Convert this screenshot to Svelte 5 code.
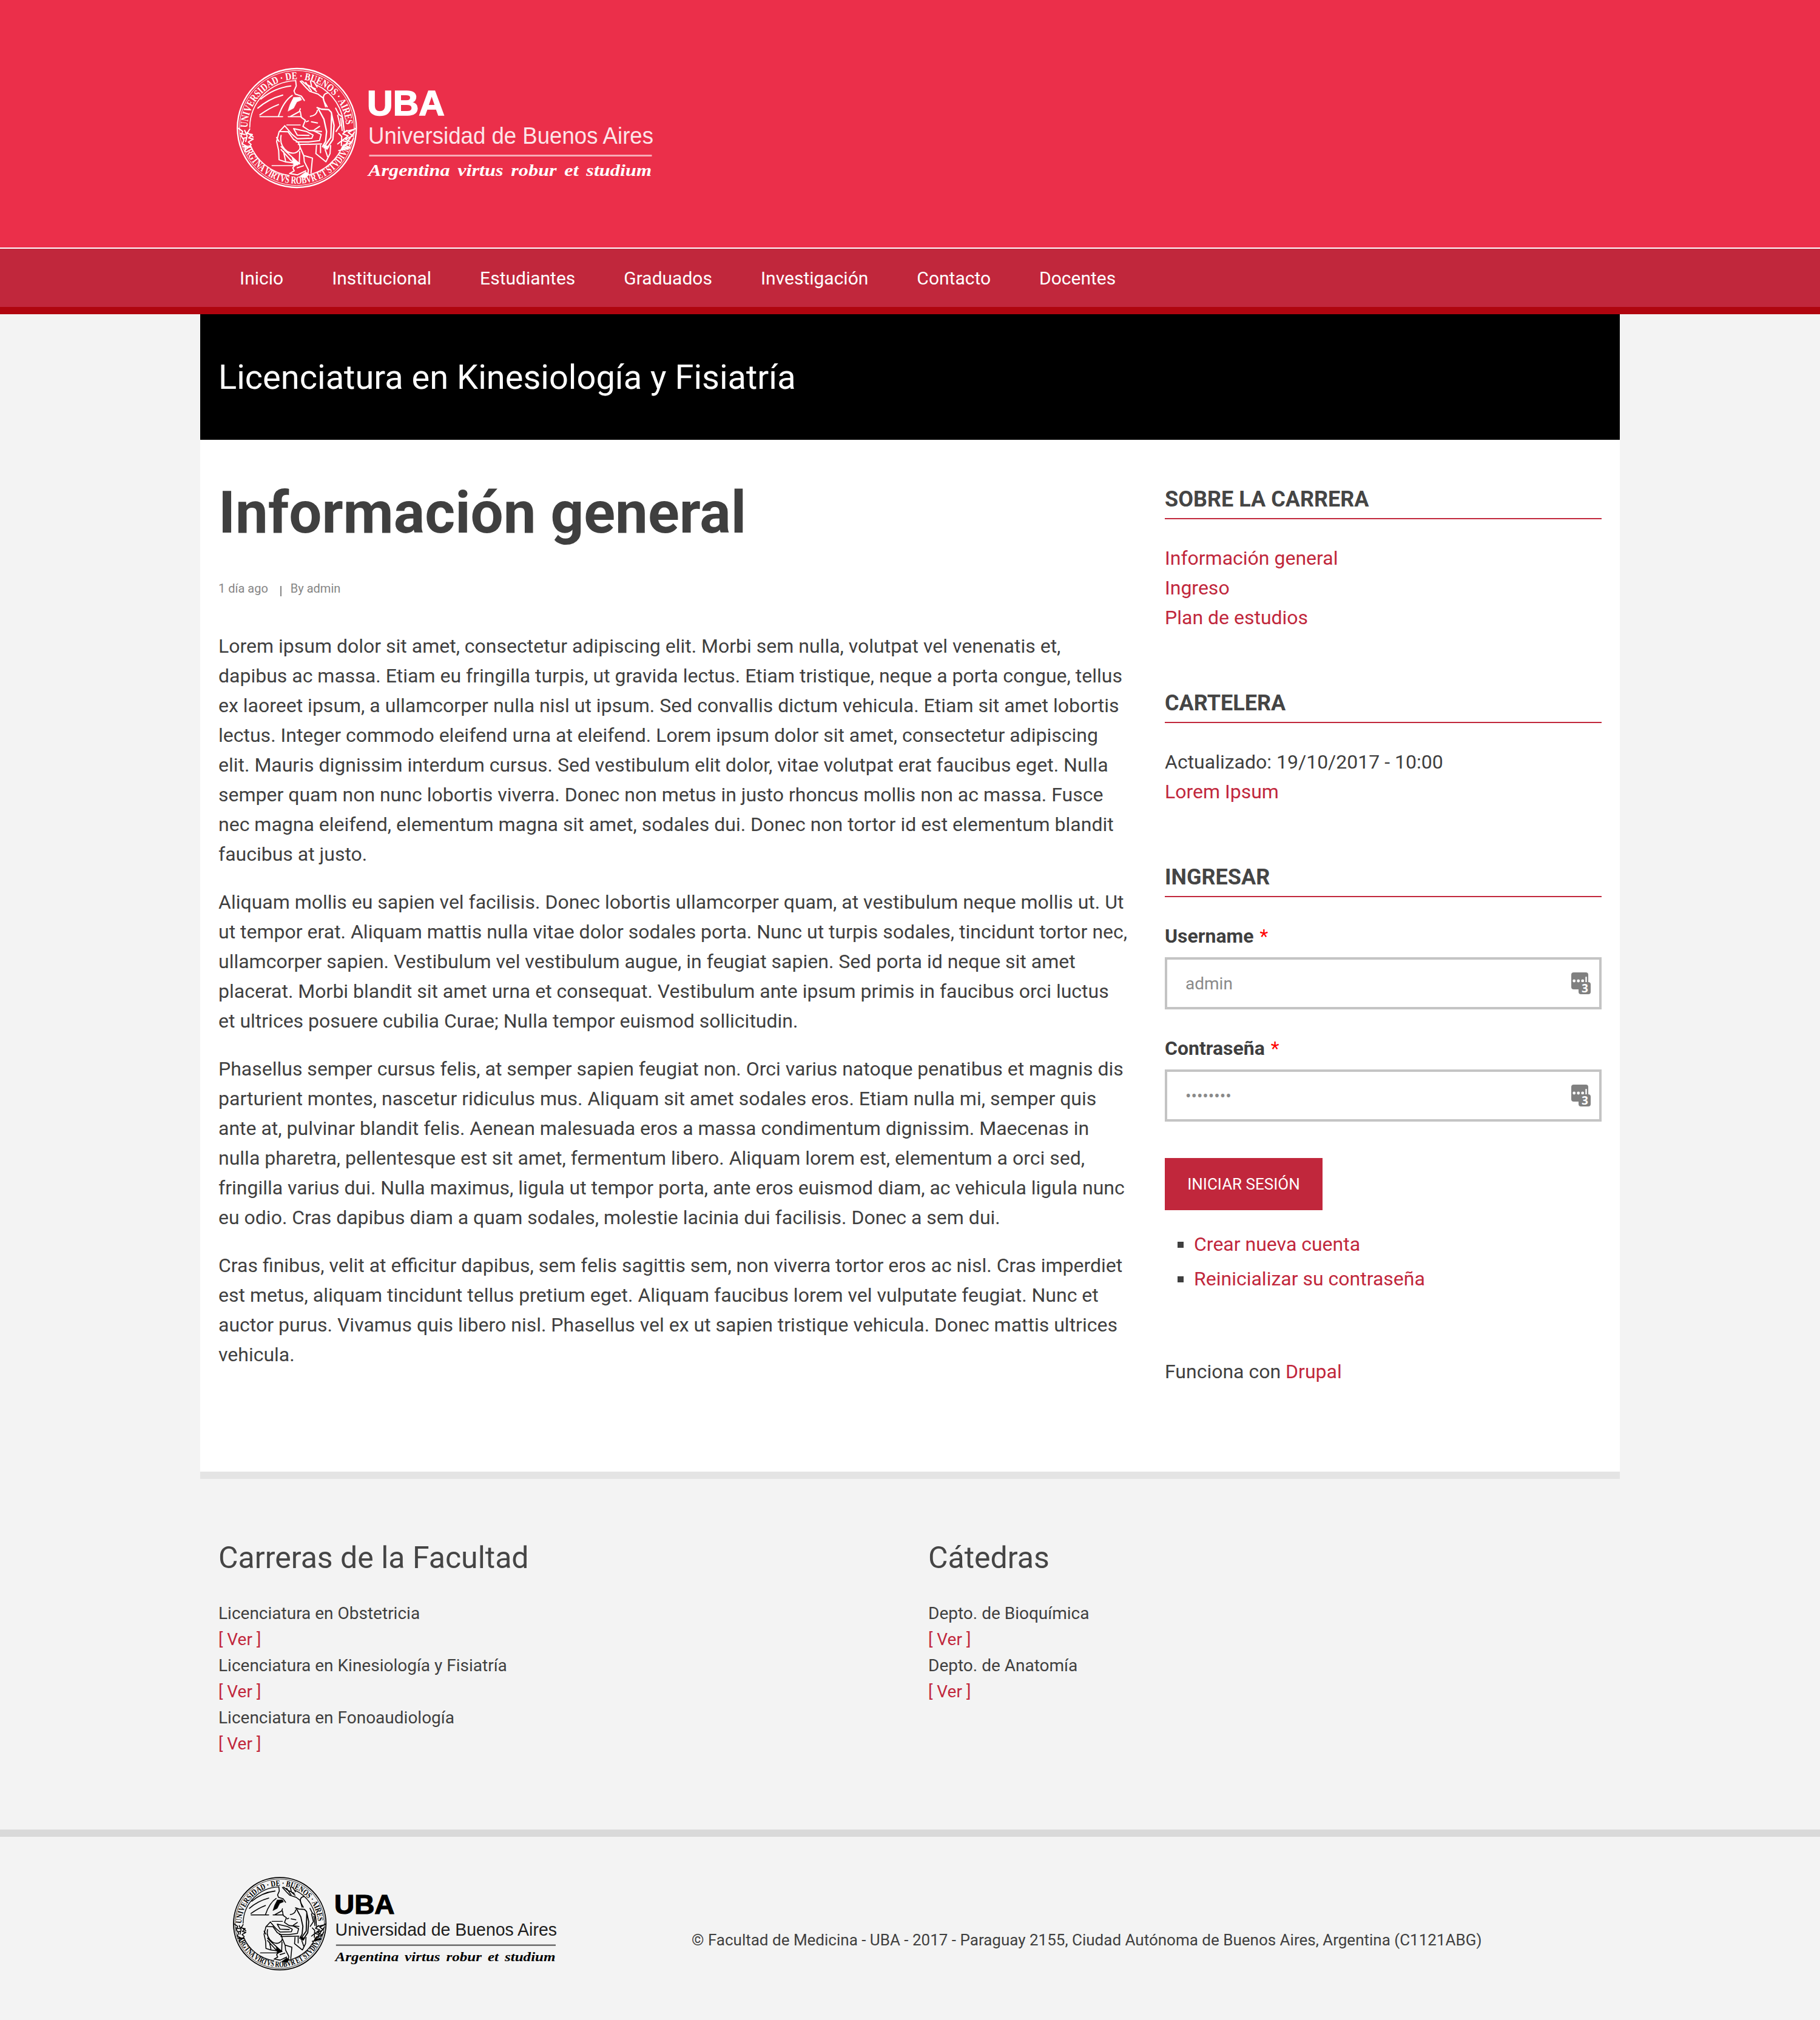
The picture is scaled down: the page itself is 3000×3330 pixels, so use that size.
<script>
  const nav = ['Inicio', 'Institucional', 'Estudiantes', 'Graduados', 'Investigación', 'Contacto', 'Docentes'];

  const paragraphs = [
    'Lorem ipsum dolor sit amet, consectetur adipiscing elit. Morbi sem nulla, volutpat vel venenatis et, dapibus ac massa. Etiam eu fringilla turpis, ut gravida lectus. Etiam tristique, neque a porta congue, tellus ex laoreet ipsum, a ullamcorper nulla nisl ut ipsum. Sed convallis dictum vehicula. Etiam sit amet lobortis lectus. Integer commodo eleifend urna at eleifend. Lorem ipsum dolor sit amet, consectetur adipiscing elit. Mauris dignissim interdum cursus. Sed vestibulum elit dolor, vitae volutpat erat faucibus eget. Nulla semper quam non nunc lobortis viverra. Donec non metus in justo rhoncus mollis non ac massa. Fusce nec magna eleifend, elementum magna sit amet, sodales dui. Donec non tortor id est elementum blandit faucibus at justo.',
    'Aliquam mollis eu sapien vel facilisis. Donec lobortis ullamcorper quam, at vestibulum neque mollis ut. Ut ut tempor erat. Aliquam mattis nulla vitae dolor sodales porta. Nunc ut turpis sodales, tincidunt tortor nec, ullamcorper sapien. Vestibulum vel vestibulum augue, in feugiat sapien. Sed porta id neque sit amet placerat. Morbi blandit sit amet urna et consequat. Vestibulum ante ipsum primis in faucibus orci luctus et ultrices posuere cubilia Curae; Nulla tempor euismod sollicitudin.',
    'Phasellus semper cursus felis, at semper sapien feugiat non. Orci varius natoque penatibus et magnis dis parturient montes, nascetur ridiculus mus. Aliquam sit amet sodales eros. Etiam nulla mi, semper quis ante at, pulvinar blandit felis. Aenean malesuada eros a massa condimentum dignissim. Maecenas in nulla pharetra, pellentesque est sit amet, fermentum libero. Aliquam lorem est, elementum a orci sed, fringilla varius dui. Nulla maximus, ligula ut tempor porta, ante eros euismod diam, ac vehicula ligula nunc eu odio. Cras dapibus diam a quam sodales, molestie lacinia dui facilisis. Donec a sem dui.',
    'Cras finibus, velit at efficitur dapibus, sem felis sagittis sem, non viverra tortor eros ac nisl. Cras imperdiet est metus, aliquam tincidunt tellus pretium eget. Aliquam faucibus lorem vel vulputate feugiat. Nunc et auctor purus. Vivamus quis libero nisl. Phasellus vel ex ut sapien tristique vehicula. Donec mattis ultrices vehicula.'
  ];

  const links = ['Información general', 'Ingreso', 'Plan de estudios'];
  const fields = [
    { id: 'user', label: 'Username', type: 'text', value: 'admin' },
    { id: 'pass', label: 'Contraseña', type: 'password', value: 'password' }
  ];
  const accountLinks = ['Crear nueva cuenta', 'Reinicializar su contraseña'];
  const directories = [
    { title: 'Carreras de la Facultad', items: ['Licenciatura en Obstetricia', 'Licenciatura en Kinesiología y Fisiatría', 'Licenciatura en Fonoaudiología'] },
    { title: 'Cátedras', items: ['Depto. de Bioquímica', 'Depto. de Anatomía'] }
  ];
</script>

{#snippet logo(id)}
  <svg class="logo-art" viewBox="0 0 720 220" aria-label="UBA Universidad de Buenos Aires">
    <defs>
      <path id="{id}-top" d="M83.500 336 A244 244 0 0 1 572 336" />
      <path id="{id}-bottom" d="M62 418 A281 281 0 0 0 594 418" />
    </defs>
    <g transform="scale(0.33333)" fill="none" stroke="currentColor" stroke-width="6" stroke-linecap="round" stroke-linejoin="round">
      <circle cx="328" cy="333" r="294" stroke-width="7" />
      <circle cx="328" cy="333" r="284" stroke-width="3" />
      <path d="M95 330 A234 234 0 0 1 320 99 M425 120 A234 234 0 0 1 560 330 M98 418 A245 245 0 0 0 290 568 M390 564 A245 245 0 0 0 556 420" stroke-width="5" />
      <g class="ring-text" fill="currentColor" stroke="none">
        <text><textPath href="#{id}-top" startOffset="4" textLength="744" lengthAdjust="spacingAndGlyphs">UNIVERSIDAD · DE · BUENOS · AIRES</textPath></text>
        <text><textPath href="#{id}-bottom" startOffset="4" textLength="690" lengthAdjust="spacingAndGlyphs">ARGTNA VIRTVS ROBVR ET STVDIVM</textPath></text>
      </g>
      <path d="M150 190 Q215 135 298 125 M135 235 Q185 190 258 170 M145 268 Q190 235 237 217" />
      <path d="M145 277 H258 M285 277 H350 M278 318 H345 M205 519 H320" stroke-width="5" />
      <path d="M322 98 L325 125 L314 150 L320 165 L350 175 L365 197 M237 275 Q262 200 305 172" />
      <path d="M312 182 L345 180 L352 194 L328 204 L312 235 L284 250 Q292 215 312 182Z" fill="currentColor" stroke-width="2" />
      <path d="M345 102 L372 132 L392 152 L432 165 M352 100 L388 128 M372 108 L400 150 M395 100 L402 132 L425 152 M410 102 L428 130 M432 165 L458 185 L470 228 M380 120 L420 140" />
      <path d="M298 275 L340 252 L345 238 M345 252 L350 280 L370 295 L358 325 L388 345 L450 350 M395 275 Q425 272 430 245 M375 302 L385 298 M400 302 L430 308 M415 342 L440 325" />
      <path d="M428 232 L450 240 L485 242 L498 255 L512 320 L506 390 L478 432 M435 240 L462 290 L475 350 L470 400 L455 425 M500 265 L496 380 L468 420" stroke-width="7" />
      <path d="M480 160 Q452 165 462 200 L478 228 M520 235 L535 265 L552 278 L562 345 M530 270 L542 320 L522 350 M545 285 L552 345 M535 360 L550 375 L548 420" />
      <path d="M268 322 L242 350 L285 352 M268 322 L302 362 L330 386 L402 384 L408 368 L375 350 L312 336 L330 368 L388 370 M408 345 L448 365 L440 395 L385 402 L325 402 M335 415 L450 412" />
      <path d="M250 370 Q240 420 282 450 Q320 470 342 438 Q350 405 312 390 L285 352 M240 352 L228 400 L238 445 L240 490 L270 500 L305 505 M228 380 L240 400 M250 425 L275 450 L335 505 M250 440 L300 495 L330 515 M262 450 L272 495 M345 430 L362 470 L365 500 L385 540 L382 565 M365 470 L405 482 L398 555 M342 450 L340 510" />
      <path d="M330 505 L308 530 L315 545 L292 558 L330 565 L372 545 M330 530 L360 520" />
      <path d="M340 574 L372 550 L390 562 L370 580Z M305 480 L345 510 L312 522Z M460 415 L488 425 L478 440 L460 432Z" fill="currentColor" stroke-width="2" />
      <path d="M425 420 L422 460 L472 500 L492 460 L495 420 M445 418 L445 455 M468 440 L480 475" />
      <path d="M40 335 L60 350 L52 372 L66 392 L58 412 L82 424 M95 338 L82 360 L108 365 L90 382 L112 388 L88 402 L102 415 M70 345 L82 372 L75 400 M48 360 L72 365 M62 425 L100 428 M72 420 L72 450 M60 385 L80 380 M82 355 L112 378" />
      <path d="M620 335 L582 355 L605 372 L568 388 L598 405 L565 418 M575 345 L555 362 L582 372 L552 395 L580 402 L555 430 L590 430 M560 352 L612 340 M612 355 L582 395 M608 385 L588 420 M545 400 L530 412 M535 445 L590 432" />
    </g>
    <g fill="currentColor">
      <text class="uba" x="225" y="89.500" textLength="128" lengthAdjust="spacingAndGlyphs">UBA</text>
      <text class="uni" x="227" y="137" textLength="470" lengthAdjust="spacingAndGlyphs">Universidad de Buenos Aires</text>
      <rect class="rule" x="228.500" y="155" width="466" height="3" />
      <text class="motto" x="227" y="190" textLength="467" lengthAdjust="spacingAndGlyphs">Argentina virtus robur et studium</text>
    </g>
  </svg>
{/snippet}

<div class="page">
  <header class="top">
    <div class="container brand">{@render logo('head')}</div>
  </header>
  <nav>
    <div class="container menu">
      {#each nav as item}<a href="#top">{item}</a>{/each}
    </div>
  </nav>

  <main class="container">
    <div class="banner">Licenciatura en Kinesiología y Fisiatría</div>
    <div class="columns">
      <article>
        <h1>Información general</h1>
        <div class="meta"><span>1 día ago</span><i></i><span>By admin</span></div>
        {#each paragraphs as p}<p>{p}</p>{/each}
      </article>
      <aside>
        <section>
          <h2>SOBRE LA CARRERA</h2>
          {#each links as l}<div><a href="#top">{l}</a></div>{/each}
        </section>
        <section>
          <h2>CARTELERA</h2>
          <div>Actualizado: 19/10/2017 - 10:00</div>
          <div><a href="#top">Lorem Ipsum</a></div>
        </section>
        <section>
          <h2>INGRESAR</h2>
          <form>
            {#each fields as f}
              <div class="field">
                <label for={f.id}>{f.label} <b>*</b></label>
                <div class="box">
                  <input id={f.id} type={f.type} value={f.value} autocomplete="off" />
                  <svg class="manager" viewBox="0 0 32 36">
                    <rect width="28" height="28" rx="4" fill="#808080" />
                    <circle cx="4.700" cy="14" r="2.400" fill="#fff" />
                    <circle cx="11.700" cy="14" r="2.400" fill="#fff" />
                    <circle cx="18.700" cy="14" r="2.400" fill="#fff" />
                    <rect x="23.300" y="7" width="2.400" height="10" rx="1" fill="#fff" />
                    <rect x="12" y="16" width="20" height="20" rx="4" fill="#808080" />
                    <text x="22.500" y="32.500" text-anchor="middle" fill="#fff">3</text>
                  </svg>
                </div>
              </div>
            {/each}
            <button type="button">INICIAR SESIÓN</button>
          </form>
          <ul>
            {#each accountLinks as l}<li><a href="#top">{l}</a></li>{/each}
          </ul>
        </section>
        <div class="powered">Funciona con{' '}<a href="#top">Drupal</a></div>
      </aside>
    </div>
  </main>

  <div class="container directories">
    {#each directories as d}
      <section>
        <h3>{d.title}</h3>
        {#each d.items as item}
          <div>{item}</div>
          <div><a href="#top">[ Ver ]</a></div>
        {/each}
      </section>
    {/each}
  </div>

  <footer>
    <div class="container foot">
      <div class="foot-logo">{@render logo('foot')}</div>
      <div class="copy">© Facultad de Medicina - UBA - 2017 - Paraguay 2155, Ciudad Autónoma de Buenos Aires, Argentina (C1121ABG)</div>
    </div>
  </footer>
</div>

<style>
  :global(body) { margin: 0; background: #f3f3f3; }
  .page { font-family: Roboto, "Liberation Sans", sans-serif; font-size: 32px; line-height: 49px; color: #3f3f3f; height: 3330px; overflow: hidden; }
  .page * { box-sizing: border-box; }
  .container { width: 2340px; margin: 0 auto; }
  a { color: #c1273c; text-decoration: none; }
  h1, h2, h3, p, ul { margin: 0; padding: 0; }

  .top { height: 410px; background: #eb2f4a; border-bottom: 2px solid #fff; }
  .brand { padding: 100px 50px 0; color: #fff; }
  .logo-art { display: block; overflow: visible; }
  .brand .logo-art { width: 720px; height: 220px; }
  .ring-text { font: bold 52px "Liberation Serif", serif; }
  .uba { font: bold 57px "Liberation Sans", sans-serif; stroke: currentColor; stroke-width: 1.5px; }
  .uni { font: 38px "Liberation Sans", sans-serif; opacity: .88; }
  .rule { opacity: .6; }
  .motto { font: italic bold 28px "Liberation Serif", serif; word-spacing: 4px; }

  nav { height: 108px; background: #c1273c; border-bottom: 12px solid #b0050f; }
  .menu { display: flex; height: 97px; align-items: center; padding-left: 65px; gap: 80px; font-size: 30px; }
  .menu a { color: #fff; }

  main { background: #fff; border-bottom: 12px solid #e4e4e4; height: 1920px; }
  .banner { height: 207px; background: #000; color: #fff; font-size: 56px; display: flex; align-items: center; padding: 2px 30px 0; }
  .columns { display: grid; grid-template-columns: 1500px 720px; gap: 60px; padding: 0 30px; }

  article { padding-top: 70px; }
  h1 { font-size: 96px; line-height: 100px; font-weight: 700; color: #3f3f3f; }
  .meta { display: flex; margin: 60px 0 56px; font-size: 20px; line-height: 30px; color: #858585; }
  .meta i { width: 2px; height: 17px; margin: 11px 15px 0 20px; background: #858585; }
  p { margin-bottom: 30px; }

  aside { padding-top: 78px; }
  aside section { margin-bottom: 96px; }
  h2 { font-size: 36px; line-height: 40px; font-weight: 700; padding-bottom: 11px; border-bottom: 2px solid #c1273c; margin-bottom: 40px; color: #454545; }
  .field { margin-bottom: 40px; }
  label { display: block; font-weight: 700; margin-bottom: 10px; }
  label b { color: #f00; font-weight: 400; margin-left: 2px; }
  .box { display: flex; align-items: center; height: 86px; border: 4px solid #c4c4c4; padding: 0 14px 0 30px; }
  input { flex: 1; border: 0; padding: 0; outline: 0; background: none; font: 28px Roboto, sans-serif; color: #8a8a8a; }
  .manager { width: 32px; height: 36px; overflow: visible; }
  .manager text { font: bold 19px "Open Sans", sans-serif; }
  button { display: block; margin-top: 60px; width: 260px; height: 86px; border: 0; padding: 0; background: #c1273c; color: #fff; font: 26px Roboto, sans-serif; }
  ul { list-style: none; margin-top: 32px; }
  li { display: flex; align-items: center; gap: 17px; padding-left: 21px; margin-bottom: 8px; }
  li::before { content: ""; width: 10px; height: 10px; background: #3f3f3f; }
  .powered { padding-top: 8px; }

  .directories { display: grid; grid-template-columns: 1170px 1170px; height: 578px; padding-top: 100px; font-size: 28px; line-height: 43px; }
  .directories section { padding-left: 30px; }
  h3 { font-size: 50px; line-height: 60px; font-weight: 400; margin-bottom: 40px; color: #454545; }

  footer { border-top: 12px solid #d9d9d9; }
  .foot { display: flex; align-items: flex-start; }
  .foot-logo { width: 760px; padding: 57px 0 0 46px; margin-right: 50px; color: #000; }
  .foot-logo .logo-art { width: 560px; height: 171px; }
  .copy { padding-top: 150px; font-size: 26px; line-height: 40px; white-space: nowrap; }
</style>
